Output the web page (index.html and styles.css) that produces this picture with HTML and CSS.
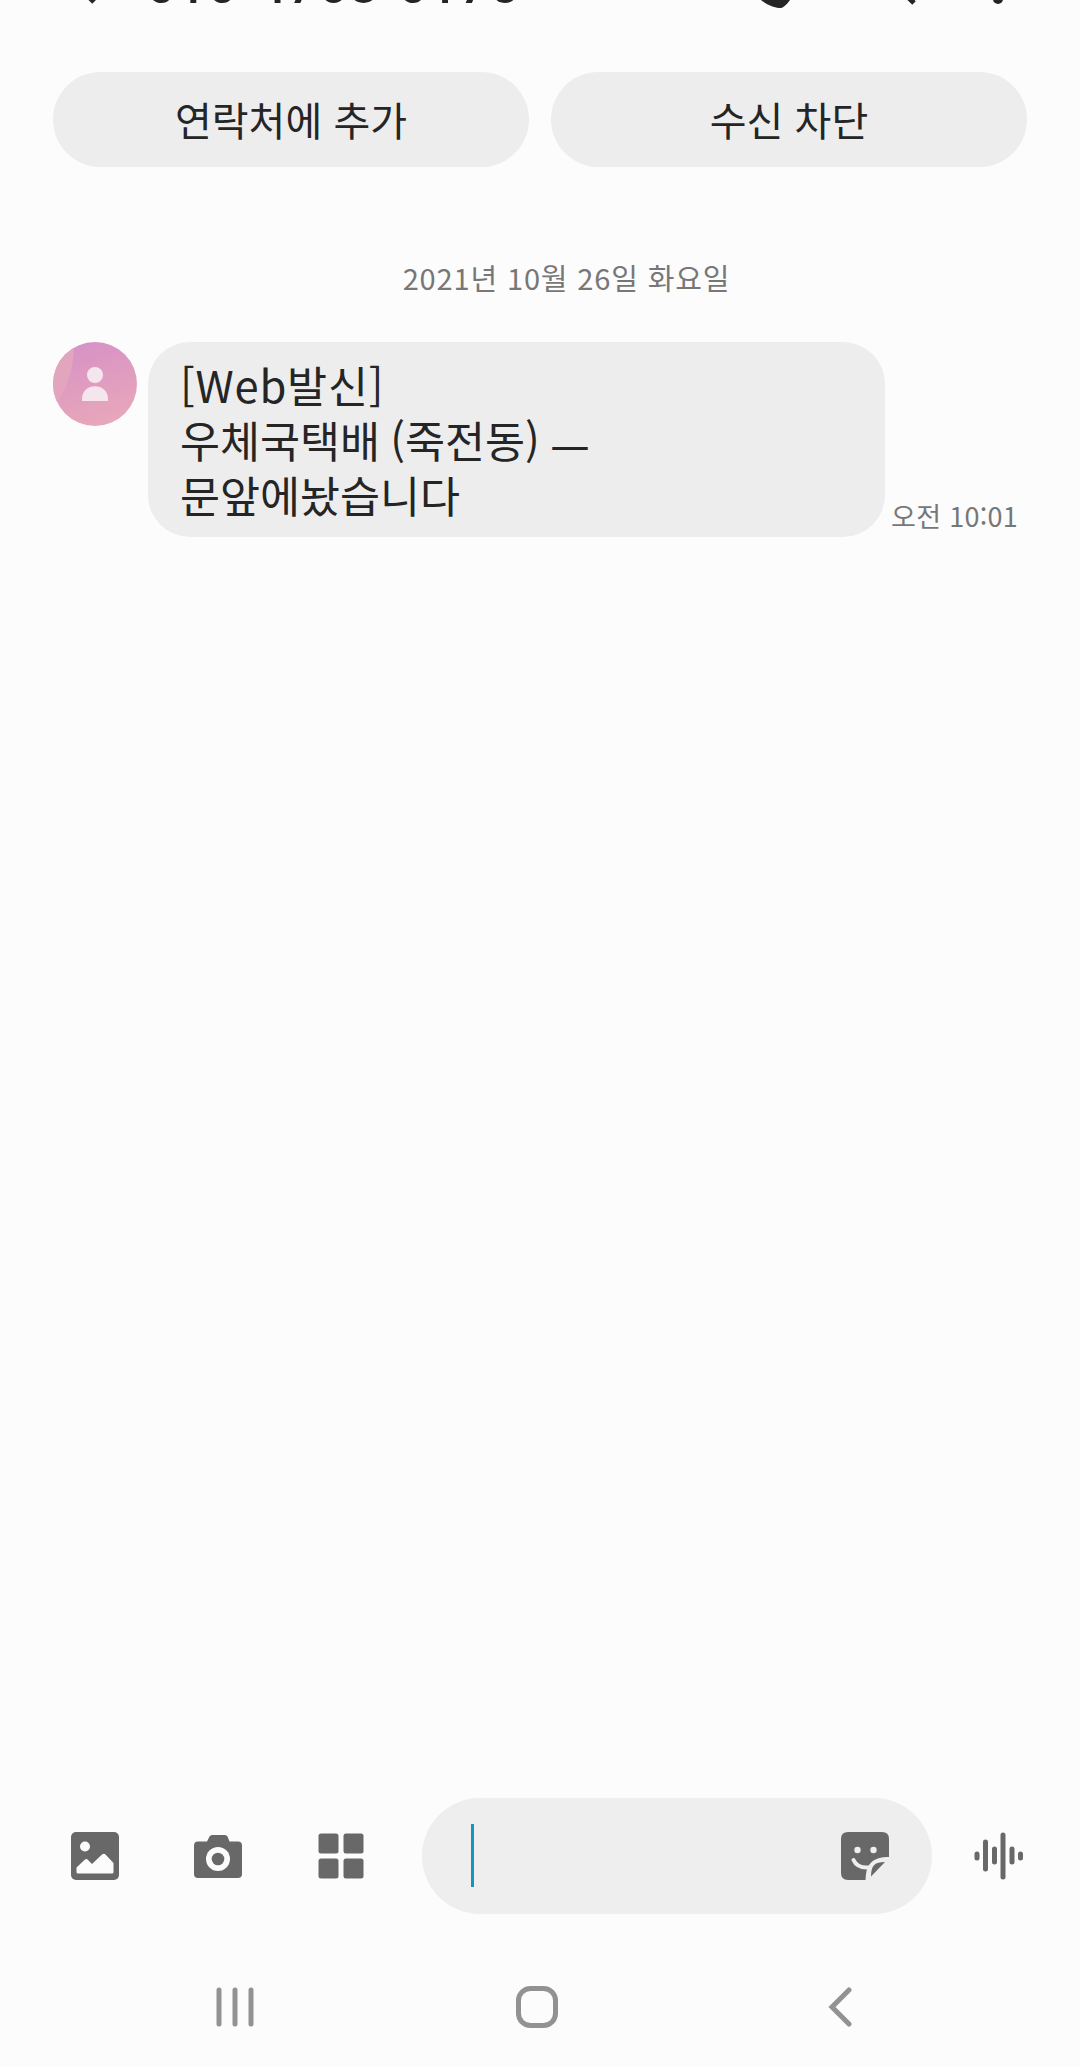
FILE: index.html
```html
<!DOCTYPE html>
<html lang="ko">
<head>
    <meta charset="UTF-8">
    <meta name="viewport" content="width=device-width, initial-scale=1.0">
    <title>메시지</title>
    <link rel="stylesheet" href="styles.css">
</head>
<body>
    <header class="header">
        <svg class="icon-header icon-back" viewBox="0 0 40 48"><path d="M25 6 8 23l17 17" /></svg>
        <h1 class="number">010-4768-0175</h1>
        <svg class="icon-header icon-call" viewBox="0 0 54 48"><path class="fill" d="M4 8c3 16 9 24 16 30 7 5.500 13 7.500 18 8q3 .500 5-1.500 4-3 7-8L39 27l-7 5C24 28 18 22 15 15l5-6-8-9z" /></svg>
        <svg class="icon-header icon-search" viewBox="0 0 48 48"><circle cx="20" cy="17" r="14" /><path d="m30 26 15 15" /></svg>
        <svg class="icon-header icon-more" viewBox="0 0 12 48"><circle class="fill" cx="6" cy="3" r="5" /><circle class="fill" cx="6" cy="20" r="5" /><circle class="fill" cx="6" cy="37" r="5" /></svg>
    </header>

    <div class="actions">
        <button class="action">연락처에 추가</button>
        <button class="action">수신 차단</button>
    </div>

    <main class="messages">
        <div class="date">2021년 10월 26일 화요일</div>
        <div class="message">
            <svg class="avatar" viewBox="0 0 84 84">
                <defs>
                    <linearGradient id="pink" x1=".3" y1="0" x2=".6" y2="1">
                        <stop offset="0" stop-color="#d792c6" />
                        <stop offset="1" stop-color="#e8a7b9" />
                    </linearGradient>
                    <clipPath id="round"><circle cx="42" cy="42" r="42" /></clipPath>
                </defs>
                <g clip-path="url(#round)">
                    <path fill="url(#pink)" d="M0 0h84v84H0z" />
                    <path fill="#e3a5bd" d="M0 0h21c0 22-4 40-16 60H0z" />
                </g>
                <g fill="#f5e6ee">
                    <circle cx="42" cy="33" r="8" />
                    <path d="M29 59v-2c0-17 26-17 26 0v2z" />
                </g>
            </svg>
            <div class="bubble">
                <div class="line line-web">[Web발신]</div>
                <div class="line line-office">우체국택배 (죽전동) <span class="dash">ㅡ</span></div>
                <div class="line">문앞에놨습니다</div>
            </div>
            <span class="time">오전 10:01</span>
        </div>
    </main>

    <div class="composer">
        <div class="tools">
            <svg class="icon" viewBox="0 0 48 48">
                <rect width="48" height="48" rx="5" />
                <circle class="light" cx="14" cy="14.500" r="5" />
                <path class="light" d="M5.500 40v-4.500l8.500-8q1.500-1 3 .500l4 4 10-9.500q2-1.500 3.500 0L42.500 31v9q0 1.500-1.500 1.500H7Q5.500 41.500 5.500 40z" />
            </svg>
            <svg class="icon" viewBox="0 0 48 48">
                <path d="M4 9.500h9l2.500-5Q16.500 3 18 3h13q1.500 0 2.500 1.500l2 5H44q4 0 4 4V42q0 4-4 4H4q-4 0-4-4V13.500q0-4 4-4z" />
                <circle class="light" cx="24" cy="27" r="12" />
                <circle cx="24" cy="27" r="6.300" />
            </svg>
            <svg class="icon" viewBox="0 0 48 48">
                <rect x="1.500" y="1.500" width="20" height="20" rx="2.500" />
                <rect x="26.500" y="1.500" width="20" height="20" rx="2.500" />
                <rect x="1.500" y="26.500" width="20" height="20" rx="2.500" />
                <rect x="26.500" y="26.500" width="20" height="20" rx="2.500" />
            </svg>
        </div>
        <div class="field">
            <span class="caret"></span>
            <svg class="icon sticker" viewBox="0 0 48 48">
                <path d="M7 0h34q7 0 7 7v18c-8 0-15 1-20 8q-3 4-3.500 15H7q-7 0-7-7V7q0-7 7-7z" />
                <path d="M44 30 30 44.500C30 33 34 30 44 30z" />
                <circle class="shade" cx="16.500" cy="18" r="3.200" />
                <circle class="shade" cx="32.500" cy="18" r="3.200" />
                <path class="smile" d="M12.500 28c3 6.500 8 8 15 7.500" />
            </svg>
        </div>
        <svg class="icon wave" viewBox="0 0 50 48">
            <path d="M3 22v4M11.500 10v27M20.500 17v13M29 3v42M38 17v13M46.500 22v4" />
        </svg>
    </div>

    <nav class="navbar">
        <svg class="nav-icon recents" viewBox="0 0 38 42"><path d="M3 4v34M19 4v34M35 4v34" /></svg>
        <svg class="nav-icon home" viewBox="0 0 42 42"><rect x="2.500" y="2.500" width="37" height="37" rx="12" /></svg>
        <svg class="nav-icon back" viewBox="0 0 24 42"><path d="M21 4 4 21l17 17" /></svg>
    </nav>
</body>
</html>
```
FILE: styles.css
```css
* {
    box-sizing: border-box;
}
body {
    display: flex;
    flex-direction: column;
    height: 2066px;
    margin: 0;
    background: #fcfcfc;
    color: #252525;
    font-family: "Noto Sans CJK KR", sans-serif;
    overflow: hidden;
}

/* header, scrolled mostly out of view */
.header {
    display: flex;
    align-items: center;
    height: 80px;
    margin-top: -54px;
    padding-left: 69px;
    flex: none;
}
.icon-header {
    height: 48px;
    fill: none;
    stroke: #252525;
    stroke-width: 5;
    flex: none;
}
.icon-header .fill {
    fill: #252525;
    stroke: none;
}
.icon-back {
    width: 40px;
}
.number {
    width: 610px;
    margin: 0;
    padding-left: 38px;
    font-family: Roboto, "Noto Sans CJK KR", sans-serif;
    font-size: 50px;
    font-weight: 500;
    line-height: 60px;
    letter-spacing: 2.1px;
}
.icon-call {
    width: 54px;
    margin-left: 22px;
}
.icon-search {
    width: 48px;
    margin-left: 74px;
}
.icon-more {
    width: 12px;
    margin-left: 75px;
}

.actions {
    display: flex;
    gap: 22px;
    padding: 46px 53px 0;
}
.action {
    flex: 1;
    height: 95px;
    padding: 0 0 2px;
    border: 0;
    border-radius: 48px;
    background: #ededed;
    color: #252525;
    font-family: inherit;
    font-size: 40px;
}

.messages {
    flex: 1;
    padding: 85px 53px 0;
}
.date {
    height: 50px;
    margin-left: 53px;
    margin-bottom: 40px;
    color: #777;
    font-size: 29px;
    line-height: 50px;
    letter-spacing: 0.85px;
    text-align: center;
}
.message {
    display: flex;
    align-items: flex-start;
}
.avatar {
    width: 84px;
    height: 84px;
    flex: none;
}
.bubble {
    width: 737px;
    height: 195px;
    margin-left: 11px;
    padding: 15px 32px;
    border-radius: 42px;
    background: #ededed;
    flex: none;
}
.line {
    height: 55px;
    font-size: 43.5px;
    line-height: 55px;
    white-space: nowrap;
}
.line-web {
    letter-spacing: 0.8px;
}
.line-office {
    word-spacing: -2px;
}
.dash {
    line-height: 0;
    vertical-align: -7px;
}
.time {
    margin-left: 6px;
    margin-bottom: 1px;
    align-self: flex-end;
    color: #777;
    font-size: 27px;
    line-height: 40px;
    letter-spacing: 0.3px;
    white-space: nowrap;
}

.composer {
    display: flex;
    align-items: center;
    height: 116px;
    padding-left: 71px;
    flex: none;
}
.tools {
    display: flex;
    gap: 75px;
    width: 351px;
}
.icon {
    width: 48px;
    height: 48px;
    fill: #686868;
    flex: none;
}
.icon .light {
    fill: #fcfcfc;
}
.icon .shade {
    fill: #eee;
}
.icon .smile {
    fill: none;
    stroke: #eee;
    stroke-width: 4;
    stroke-linecap: round;
}
.field {
    display: flex;
    align-items: center;
    justify-content: space-between;
    width: 510px;
    height: 116px;
    padding: 0 43px 0 49px;
    border-radius: 58px;
    background: #eee;
}
.caret {
    width: 3px;
    height: 63px;
    margin-bottom: 1px;
    background: #1497bf;
}
.wave {
    width: 50px;
    margin-left: 42px;
    fill: none;
    stroke: #686868;
    stroke-width: 5;
    stroke-linecap: round;
}

.navbar {
    display: flex;
    align-items: center;
    height: 152px;
    padding: 34px 0 0 216px;
    flex: none;
}
.nav-icon {
    height: 42px;
    fill: none;
    stroke: #929292;
    stroke-width: 5;
    stroke-linecap: round;
    flex: none;
}
.recents {
    width: 38px;
}
.home {
    width: 42px;
    margin-left: 262px;
}
.back {
    width: 24px;
    margin-left: 270px;
}
```
